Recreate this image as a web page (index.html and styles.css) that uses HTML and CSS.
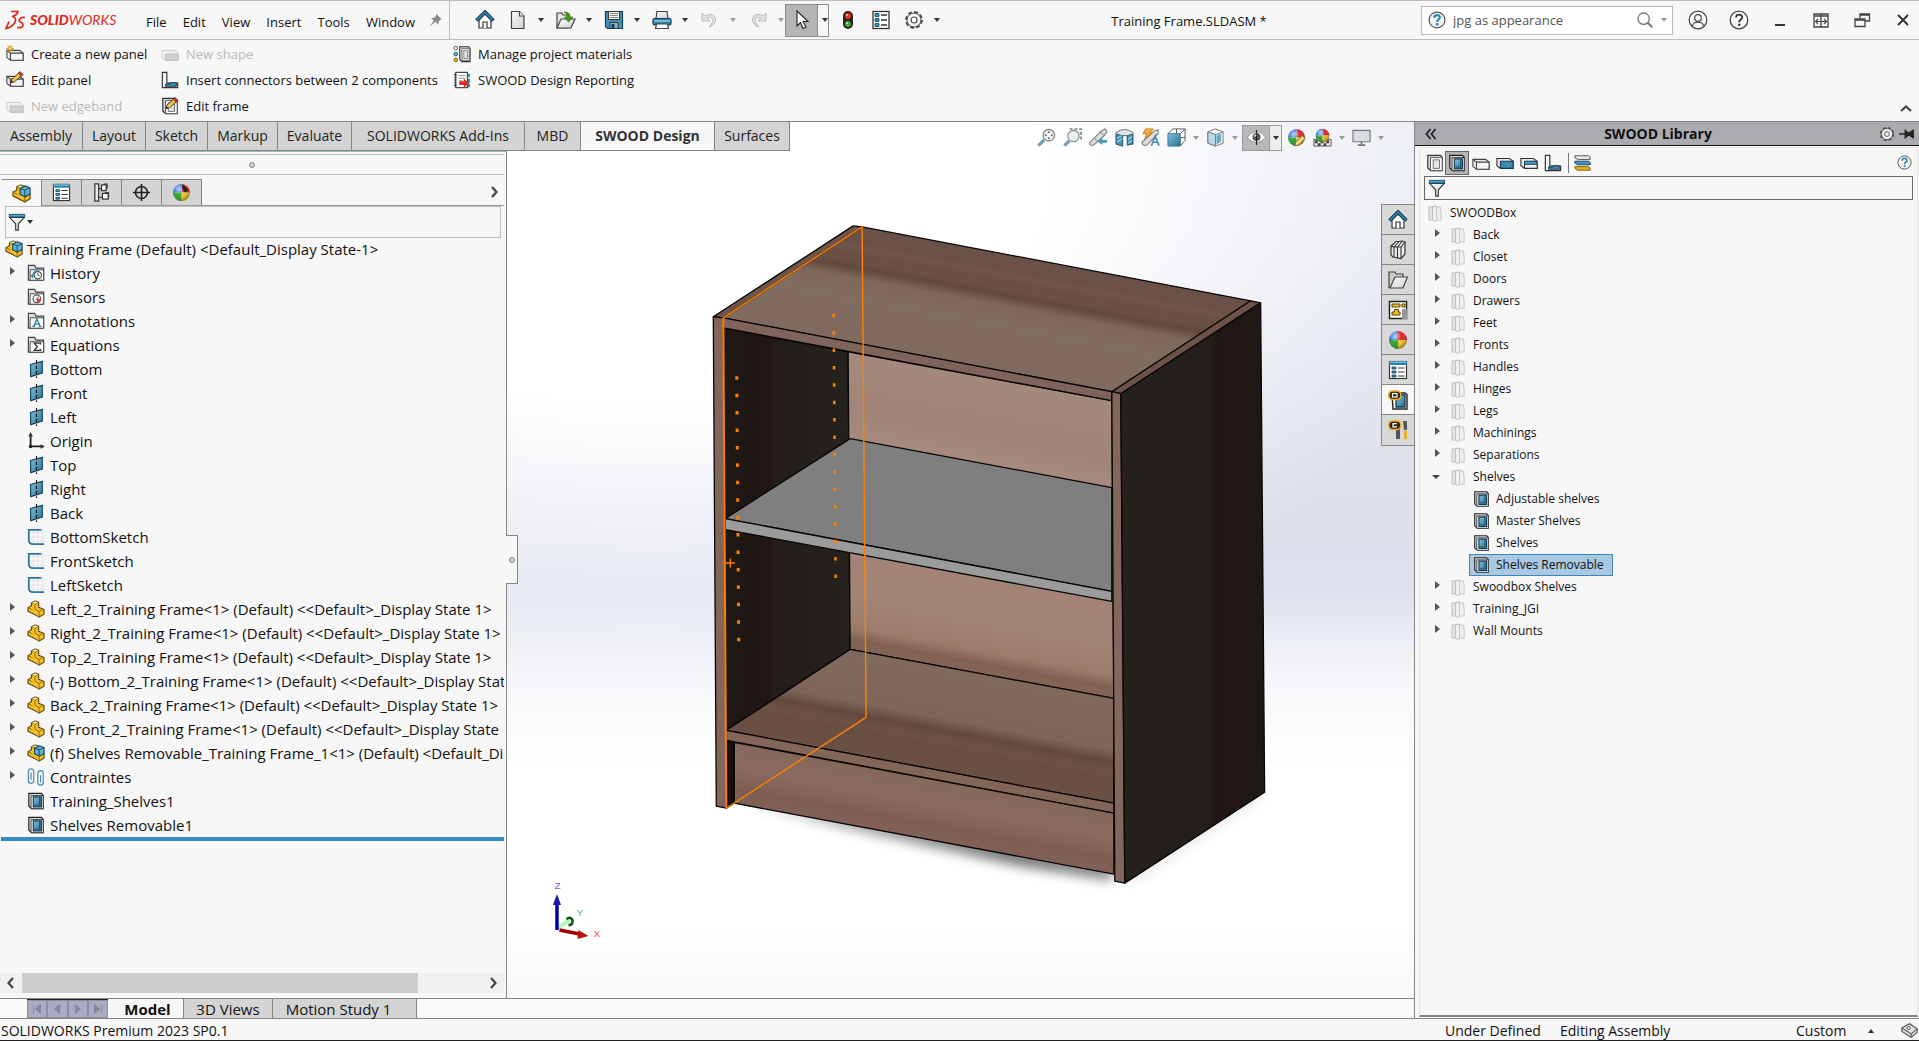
FILE: index.html
```html
<!DOCTYPE html>
<html lang="en">
<head>
<meta charset="UTF-8">
<meta name="viewport" content="width=device-width, initial-scale=1.0">
<title>Training Frame.SLDASM</title>
<link rel="stylesheet" href="styles.css">
</head>
<body>
<!-- icon sprite -->
<svg class="sprite" aria-hidden="true">
  <defs>
    <linearGradient id="gBlue" x1="0" y1="0" x2="1" y2="1"><stop offset="0" stop-color="#7fc0da"/><stop offset="1" stop-color="#2d6f92"/></linearGradient>
    <linearGradient id="gGrey" x1="0" y1="0" x2="1" y2="1"><stop offset="0" stop-color="#ffffff"/><stop offset="1" stop-color="#cfcfcf"/></linearGradient>
    <radialGradient id="gShine" cx="35%" cy="30%" r="70%"><stop offset="0" stop-color="#fff" stop-opacity=".7"/><stop offset=".5" stop-color="#fff" stop-opacity="0"/><stop offset="1" stop-color="#000" stop-opacity=".35"/></radialGradient>
  </defs>
  <symbol id="home" viewBox="0 0 20 20"><path d="M4 10v8h12v-8l-6-6z" fill="#fff" stroke="#333" stroke-width="1.2"/><path d="M8 18v-6h4v6" fill="#fff" stroke="#333" stroke-width="1.2"/><path d="M1.5 10.5 10 2l8.500 8.500" fill="none" stroke="#123f58" stroke-width="3.600"/><path d="M2 10 10 2.200 18 10" fill="none" stroke="#2f82a8" stroke-width="1.800"/></symbol>
  <symbol id="new" viewBox="0 0 20 20"><path d="M3.500 1.500h8l4.500 4.500v12.500h-12.500z" fill="url(#gGrey)" stroke="#444" stroke-width="1.200"/><path d="M11.500 1.500v4.500H16" fill="#eee" stroke="#444" stroke-width="1.200"/></symbol>
  <symbol id="open" viewBox="0 0 20 20"><path d="M1 3h5l1 2h5v13H1z" fill="#e6e6e6" stroke="#444" stroke-width="1.200"/><path d="M1 18 5 9h14l-4 9z" fill="url(#gGrey)" stroke="#444" stroke-width="1.200"/><path d="M8 2c4 0 6 1 6 5h3l-4.500 5L8.500 7h2.500c0-3-1-4-3-5z" fill="#3f9a12" stroke="#2b6d0b" stroke-width=".6"/></symbol>
  <symbol id="save" viewBox="0 0 20 20"><path d="M1.500 1.500h17v17h-15l-2-2z" fill="#4690b5" stroke="#173f55" stroke-width="1.200"/><path d="M4.500 1.500h11v8h-11z" fill="#f4f4f4" stroke="#333"/><path d="M6 3.500h8M6 5.500h8M6 7.500h8" stroke="#888"/><path d="M6 12.500h8v6H6z" fill="#9fb4bf" stroke="#173f55"/><path d="M7.500 14h3v4.500h-3z" fill="#173f55"/></symbol>
  <symbol id="print" viewBox="0 0 20 20"><path d="M5 1.500h10l1 7H4z" fill="url(#gGrey)" stroke="#444" stroke-width="1.200"/><rect x="1" y="8.500" width="18" height="6.500" rx="1.500" fill="#2f82a8" stroke="#123f58" stroke-width="1.200"/><path d="M2 11h16" stroke="#a6dcf0" stroke-width="1.200"/><path d="M4.500 14h11l1 4.500h-13z" fill="#fff" stroke="#444" stroke-width="1.200"/></symbol>
  <symbol id="undo" viewBox="0 0 20 20"><path d="M2 3v8h8L7 8c4-2 7 1 5 5l-3 4c8-2 9-12 1-12.500-2 0-3 .5-5 1.500z" fill="#e2e2e2" stroke="#bbb"/></symbol>
  <symbol id="cursor" viewBox="0 0 20 20"><path d="M5 1v15l3.500-3.500 2.500 6 3-1.500-3-5.500h5z" fill="#fff" stroke="#222" stroke-width="1.100"/></symbol>
  <symbol id="traffic" viewBox="0 0 20 20"><rect x="5" y="1" width="10" height="18" rx="5" fill="#2c2320"/><circle cx="10" cy="6" r="3" fill="#e8321c"/><circle cx="10" cy="14" r="3" fill="#3fa13a"/><circle cx="9" cy="5" r="1" fill="#ffb4a6"/><circle cx="9" cy="13" r="1" fill="#bff0b8"/></symbol>
  <symbol id="list" viewBox="0 0 20 20"><rect x="2" y="1.500" width="16" height="17" fill="#fff" stroke="#333" stroke-width="1.300"/><path d="M4 3.500h4v3H4zM4 8.500h4v3H4zM4 13.500h4v3H4z" fill="#3b8db4" stroke="#17455e" stroke-width=".8"/><path d="M10 5h6M10 10h6M10 15h6" stroke="#333" stroke-width="1.300"/></symbol>
  <symbol id="props" viewBox="0 0 20 20"><rect x="1.500" y="1.500" width="17" height="17" fill="#fff" stroke="#333" stroke-width="1.200"/><path d="M1 1h18v4H1z" fill="#2f82a8"/><path d="M2 2.200h16" stroke="#8fd0e8"/><path d="M4 7h4v2H4zM4 11h4v2H4zM4 15h4v2H4z" fill="#3b8db4" stroke="#17455e" stroke-width=".8"/><path d="M10 8h6.500M10 12h6.500M10 16h6.500" stroke="#333" stroke-width="1.100"/></symbol>
  <symbol id="gear" viewBox="0 0 20 20"><circle cx="10" cy="10" r="7.600" fill="none" stroke="#4a4a4a" stroke-width="2.600" stroke-dasharray="3.600 2.370"/><circle cx="10" cy="10" r="7" fill="#f4f4f4" stroke="#4a4a4a" stroke-width="1"/><circle cx="10" cy="10" r="3" fill="#fff" stroke="#4a4a4a" stroke-width="1.200"/></symbol>
  <symbol id="help" viewBox="0 0 20 20"><circle cx="10" cy="10" r="8.800" fill="none" stroke="#444" stroke-width="1.300"/><path d="M7 7.500c0-4 6.200-3.800 6.200-.3 0 2.200-3 2.400-3 5" fill="none" stroke="#333" stroke-width="1.800"/><circle cx="10.200" cy="14.800" r="1.200" fill="#333"/></symbol>
  <symbol id="helpblue" viewBox="0 0 20 20"><circle cx="10" cy="10" r="8.800" fill="#f4f4f4" stroke="#555" stroke-width="1.300"/><path d="M7 7.500c0-4 6.200-3.800 6.200-.3 0 2.200-3 2.400-3 5" fill="none" stroke="#2e86b0" stroke-width="2.400"/><circle cx="10.200" cy="14.800" r="1.500" fill="#2e86b0"/></symbol>
  <symbol id="user" viewBox="0 0 20 20"><circle cx="10" cy="10" r="8.800" fill="none" stroke="#444" stroke-width="1.200"/><circle cx="10" cy="8" r="3.300" fill="none" stroke="#444" stroke-width="1.200"/><path d="M4.500 16c.5-5 10.500-5 11 0" fill="none" stroke="#444" stroke-width="1.200"/></symbol>
  <symbol id="search" viewBox="0 0 20 20"><circle cx="8.500" cy="8.500" r="6.300" fill="none" stroke="#777" stroke-width="1.500"/><path d="m13 13 5 5" stroke="#777" stroke-width="2.200"/></symbol>
  <symbol id="minimize" viewBox="0 0 20 20"><path d="M5 15h10" stroke="#333" stroke-width="2"/></symbol>
  <symbol id="span" viewBox="0 0 20 20"><path d="M3 4h14v13H3zM3 6h14M10 4v13" fill="none" stroke="#444" stroke-width="1.300"/><path d="M4.500 11.500h11M7 9l-2.500 2.500L7 14M13 9l2.500 2.500L13 14" fill="none" stroke="#444" stroke-width="1.100"/></symbol>
  <symbol id="restore" viewBox="0 0 20 20"><path d="M8 8V4h9.500v7H13M8 5h9.500" fill="none" stroke="#444" stroke-width="1.300"/><path d="M3 9h10v7.500H3zM3 10h10" fill="none" stroke="#444" stroke-width="1.300"/></symbol>
  <symbol id="close" viewBox="0 0 20 20"><path d="m5 5 10 10M15 5 5 15" stroke="#333" stroke-width="1.800"/></symbol>
  <symbol id="pin" viewBox="0 0 16 16"><path d="M8 1 15 7l-2 .5-2 2.500 0 3.500L7.500 10 1 15l4.500-6.500L2.500 6 6 5.500 8 3z" fill="#8a8a8a"/></symbol>
  <symbol id="panel" viewBox="0 0 20 20"><path d="M1 6h14l4 3v8H5l-4-3z" fill="#e9e9e9" stroke="#444" stroke-width="1.200"/><path d="M5 9h14v8H5zM1 6l4 3" fill="#f6f6f6" stroke="#444" stroke-width="1.200"/></symbol>
  <symbol id="star" viewBox="0 0 20 20"><use href="#panel"/><path d="M4.500 0v8M.5 4h8M1.700 1.200l5.600 5.600M7.300 1.200 1.700 6.800" stroke="#d98a1c" stroke-width="1.200"/><circle cx="4.500" cy="4" r="1.500" fill="#ffe08a"/></symbol>
  <symbol id="pencil" viewBox="0 0 20 20"><path d="m5.500 13 1-4L14.500 2l3 3-8 7z" fill="#f0c64a" stroke="#333"/><path d="m13.500 2.500 2-2 3.500 3.500-2 2z" fill="#d5342b" stroke="#5b1d18" stroke-width=".6"/><path d="m5.500 13 .8-2.500L8 12z" fill="#222"/></symbol>
  <symbol id="editpanel" viewBox="0 0 20 20"><use href="#panel"/><use href="#pencil"/></symbol>
  <symbol id="panelblue" viewBox="0 0 20 20"><path d="M1 5h14l4 3v8H5l-4-3z" fill="#e9e9e9" stroke="#333" stroke-width="1.200"/><path d="M5 8h14v8H5z" fill="#3f8bb0" stroke="#0f3b55" stroke-width="1.200"/></symbol>
  <symbol id="paneledge" viewBox="0 0 20 20"><path d="M1 5h14l4 3v8H5l-4-3z" fill="#e9e9e9" stroke="#333" stroke-width="1.200"/><path d="M5 9h14v7H5z" fill="#f3f3f3" stroke="#333" stroke-width="1.200"/><path d="M5 8h14v3.500H5z" fill="#4c9ac0" stroke="#0f3b55"/></symbol>
  <symbol id="edgeoff" viewBox="0 0 20 20"><path d="M1 6h14l4 3v8H5l-4-3z" fill="#f0f0f0" stroke="#c6c6c6"/><path d="M5 10h14v7H5z" fill="#d0d0d0" stroke="#bdbdbd"/></symbol>
  <symbol id="connector" viewBox="0 0 20 20"><path d="M1.500 1.500h5v12h12v5h-17z" fill="#f4f4f4" stroke="#333" stroke-width="1.300"/><path d="M5 14.500h5v-1.500h7v4H5z" fill="#3f8bb0" stroke="#0f3b55"/></symbol>
  <symbol id="frame" viewBox="0 0 20 20"><path d="M2 1.500h14l2 2v15H5l-3-3z" fill="#d6d6d6" stroke="#333" stroke-width="1.300"/><path d="M5 4h13v14.500H5z" fill="#fbfbfb" stroke="#555"/><path d="M8 6.500h7v9.500H8z" fill="#e6e6e6" stroke="#666"/></symbol>
  <symbol id="frameblue" viewBox="0 0 20 20"><path d="M2 1.500h14l2 2v15H5l-3-3z" fill="#d6d6d6" stroke="#222" stroke-width="1.300"/><path d="M4.500 4H18v14.500H4.500z" fill="#fbfbfb" stroke="#333"/><path d="M7 5.500h9v11H7z" fill="url(#gBlue)" stroke="#0f3b55" stroke-width="1.300"/><path d="M14 6v8.500H8" fill="none" stroke="#164a66"/></symbol>
  <symbol id="editframe" viewBox="0 0 20 20"><use href="#frame"/><use href="#pencil"/></symbol>
  <symbol id="materials" viewBox="0 0 20 20"><circle cx="3" cy="3.500" r="2" fill="#fff" stroke="#444"/><circle cx="3" cy="10" r="2" fill="#4fb0dc" stroke="#1c5573"/><circle cx="3" cy="16.500" r="2" fill="#e8b818" stroke="#7a5e08"/><path d="M7.500 2h10l1.500 2v14.500H9.500L7.500 16z" fill="#d6d6d6" stroke="#333" stroke-width="1.200"/><path d="M10 4h8v13h-8z" fill="#fff" stroke="#666"/><path d="M12 6h4v9h-4z" fill="#e6e6e6" stroke="#777"/></symbol>
  <symbol id="report" viewBox="0 0 20 20"><rect x="3" y="1.500" width="13" height="17" fill="#fff" stroke="#333" stroke-width="1.200"/><path d="M1 4h3M1 7h3M1 10h3M1 13h3M1 16h3" stroke="#333" stroke-width="1.200"/><path d="M6 5h8M6 8h8M6 11h5" stroke="#888"/><path d="M17.500 3v4M17.500 9v4M17.500 14v4" stroke="#2f82a8" stroke-width="2.400"/><path d="M7 11.500h5V8.500l6 5-6 5v-3H7z" fill="#d9302c"/></symbol>
  <symbol id="part" viewBox="0 0 20 20"><path d="m1 8.500 4-2V3l4-2 4 1.500V8l6 2.500v5L13.500 19 9 16.500 1 12.500z" fill="#f3bf24" stroke="#5a430b" stroke-width="1.200" stroke-linejoin="round"/><path d="m5 3 4 1.700 4-2M9 4.700V10l4.500 2.500L19 10.500M13.500 12.500V19M1 8.500l5 2.500" fill="none" stroke="#8a6712"/><path d="m5.800 3 3.200-1.500 3.200 1.200L9 4.200z" fill="#ffe9a0"/></symbol>
  <symbol id="assembly" viewBox="0 0 20 20"><use href="#part"/><path d="m8.500 4.500 5.500-2.500 5 2v6.500l-5 3-5.500-2.500z" fill="#5fb0d4" stroke="#17455e" stroke-width="1.200"/><path d="m8.500 4.500 5 2 5.500-2.500M13.500 6.500v6.500" fill="none" stroke="#17455e"/></symbol>
  <symbol id="config" viewBox="0 0 20 20"><path d="M3 1v18h4V1zM7 6h4M7 15h4" fill="#eee" stroke="#333" stroke-width="1.300"/><path d="M10 2h5v6h-5zM11 11h6v6h-6z" fill="#fff" stroke="#333" stroke-width="1.300"/><path d="M13 2V1h3v5M14 11v-1h3.500v6" fill="none" stroke="#333"/></symbol>
  <symbol id="target" viewBox="0 0 20 20"><circle cx="10" cy="10" r="6.300" fill="none" stroke="#222" stroke-width="1.700"/><path d="M10 1v18M1 10h18" stroke="#222" stroke-width="1.700"/></symbol>
  <symbol id="ball" viewBox="0 0 20 20"><path d="M10 10V1A9 9 0 0 1 19 10z" fill="#df2626"/><path d="M10 10H1A9 9 0 0 1 10 1z" fill="#2b6fe0"/><path d="M10 10v9A9 9 0 0 1 1 10z" fill="#2ea02b"/><path d="M10 10h9a9 9 0 0 1-9 9z" fill="#efc52c"/><circle cx="10" cy="10" r="9" fill="url(#gShine)"/></symbol>
  <symbol id="display" viewBox="0 0 20 20"><use href="#ball"/><path d="m11 1 6 6-2 3c-3-1-5-4-4-9z" fill="#222"/></symbol>
  <symbol id="funnel" viewBox="0 0 20 20"><path d="M2 5h16l-6.500 7v7h-3v-7z" fill="url(#gGrey)" stroke="#333" stroke-width="1.200"/><path d="M1.500 1.500h17v3h-17z" fill="#4ba3cc" stroke="#164a66"/></symbol>
  <symbol id="folder" viewBox="0 0 20 20"><path d="M1.500 18V1.500h7l1.500 3h8.500V18z" fill="#ddd" stroke="#444" stroke-width="1.300"/><path d="M3.500 6.500h15V18h-15z" fill="#fafafa" stroke="#444"/></symbol>
  <symbol id="f-history" viewBox="0 0 20 20"><use href="#folder"/><circle cx="12" cy="12.500" r="4" fill="#fff" stroke="#444" stroke-width="1.200"/><path d="M12 10v2.500l2 1" fill="none" stroke="#444"/><path d="M3.500 12h5l-2.500 4z" fill="#2e86b0"/><path d="M6.500 12c.5-4 4-5 6-4" fill="none" stroke="#2e86b0" stroke-width="1.400"/></symbol>
  <symbol id="f-sensor" viewBox="0 0 20 20"><use href="#folder"/><circle cx="11" cy="12" r="4.300" fill="#fff" stroke="#444" stroke-width="1.200"/><path d="M11 12h4.300a4.300 4.300 0 0 1-4.300 4.300z" fill="#e03a1c"/><path d="m10 13 3-3.500" stroke="#333"/></symbol>
  <symbol id="f-note" viewBox="0 0 20 20"><use href="#folder"/><path d="m7.500 16 3.500-8.500 3.500 8.500M8.500 13.500h5M6 16h3M13 16h3" fill="none" stroke="#2e7da6" stroke-width="1.500"/></symbol>
  <symbol id="f-sum" viewBox="0 0 20 20"><use href="#folder"/><path d="M15 9.500v-1.500H8l3.500 4L8 16h7v-1.500" fill="none" stroke="#333" stroke-width="1.400"/></symbol>
  <symbol id="plane" viewBox="0 0 20 20"><path d="m4 5 13-3.500v13L4 18.500z" fill="url(#gBlue)" stroke="#164a66" stroke-width="1.300"/><path d="M10.500 0v20" stroke="#111" stroke-width="1.200" stroke-dasharray="4 2"/></symbol>
  <symbol id="origin" viewBox="0 0 20 20"><path d="M4 3v13h13" fill="none" stroke="#222" stroke-width="2"/><path d="M4 0 1.500 5h5zM20 16l-5-2.500v5z" fill="#333"/><circle cx="4" cy="16" r="2" fill="#222"/></symbol>
  <symbol id="sketch" viewBox="0 0 20 20"><path d="M7 0v18M12 0v18M17 0v18M2 5h18M2 10h18M2 15h18" stroke="#e2e2e2"/><path d="M16 2H2v11q0 5 5 5h12" fill="none" stroke="#2d769e" stroke-width="2"/></symbol>
  <symbol id="clips" viewBox="0 0 20 20"><path d="M1.500 4v10q0 3 3 3t3-3V4q0-3-3-3t-3 3M4.500 5v8M12 6v10q0 3 3 3t3-3V6q0-3-3-3t-3 3M15 8v8" fill="none" stroke="#4587a8" stroke-width="1.300"/></symbol>
  <symbol id="book" viewBox="0 0 16 18"><path d="M1 2h8v14H1z" fill="#e4e4e4" stroke="#bdbdbd"/><path d="M5 1.500 9 1v15.500l-2 1-2-1.500z" fill="#f6f6f6" stroke="#b5b5b5"/><path d="M9 2h4l1 5v9H9z" fill="#efefef" stroke="#c3c3c3"/></symbol>
  <symbol id="stack" viewBox="0 0 20 20"><path d="M1 2h15l2 1.500V6H4L1 4z" fill="#eee" stroke="#444"/><path d="M1 8h15l2 1.500V12H4l-3-2z" fill="#4596bd" stroke="#123f58"/><path d="M1 14h15l2 1.500V18H4l-3-2z" fill="#e2b022" stroke="#7a5e08"/></symbol>
  <symbol id="zoomfit" viewBox="0 0 20 20"><path d="m1.500 18.500 6-6" stroke="#6b9fba" stroke-width="3.400"/><circle cx="12.500" cy="7.500" r="6" fill="#f6fafc" stroke="#777" stroke-width="1.200"/><path d="m12.500 3 1.500 2h-3zM12.500 12l1.500-2h-3zM8 7.500 10 6v3zM17 7.500 15 6v3z" fill="#444"/></symbol>
  <symbol id="zoomarea" viewBox="0 0 20 20"><path d="M7 1h12v13" fill="none" stroke="#444" stroke-width="1.200" stroke-dasharray="3 2"/><path d="m1.500 18.500 5-5" stroke="#6b9fba" stroke-width="3.400"/><circle cx="11" cy="8.500" r="6" fill="#e6f1f6" stroke="#888" stroke-width="1.200"/></symbol>
  <symbol id="prev" viewBox="0 0 20 20"><path d="m1 15 12-12 4-2 2 3-3 4-11 10q-5 1-4-3z" fill="#ddd" stroke="#777" stroke-width="1.100"/><path d="m6 11 4 4M12 4l4 4" stroke="#777"/><path d="m9 14 5-4v2.500h5v3h-5V18z" fill="#4a96bd"/></symbol>
  <symbol id="section" viewBox="0 0 20 20"><path d="M1 5q9-7 18 0v12l-6 1V8H8v11l-7-2z" fill="#e4e4e4" stroke="#666"/><path d="M1.500 6.500 8 8v11l-6.500-2zM13 8l5.500-1.500v10L13 18z" fill="#4b96bb" stroke="#27607d"/><path d="m2 11 5-3M2 15l6-4M14 12l4-3M14 16l4-3" stroke="#cfe8f3"/></symbol>
  <symbol id="annview" viewBox="0 0 20 20"><path d="m1 15 13-12 4-1v4L6 18q-5 1-5-3z" fill="#ddd" stroke="#777" stroke-width="1.100"/><path d="M5 1h8l-4 4h3L4 11l2-5H2z" fill="#f3b23a" stroke="#c07b18"/><path d="m11 18.500 4-10 4 10M12.500 15h5" fill="none" stroke="#4b8fb5" stroke-width="1.800"/></symbol>
  <symbol id="cube" viewBox="0 0 20 20"><path d="m1 6 5-5h13v12l-5 6M14 6l5-5M10 1v5M14 10h5" fill="#fff" stroke="#555"/><path d="M1 6h13v13H1z" fill="url(#gBlue)" stroke="#3d7695"/></symbol>
  <symbol id="style" viewBox="0 0 20 20"><path d="m2 4 8-3 8 3v12l-8 3-8-3z" fill="#f2f6f8" stroke="#777"/><path d="m2 4 8 3v12l-8-3z" fill="#b7d9e8" stroke="#777"/><path d="m11 8 5-2v8l-5 3z" fill="#67a9c9"/><path d="m10 7 8-3" stroke="#777"/></symbol>
  <symbol id="eye" viewBox="0 0 20 20"><path d="M0 10q10-13 20 0-10 11-20 0z" fill="#fff" stroke="#888"/><circle cx="10" cy="9.500" r="4.200" fill="#555"/><path d="M10 2v16" stroke="#222" stroke-width="1.200"/><circle cx="8.500" cy="8" r="1.300" fill="#ccc"/></symbol>
  <symbol id="appearance" viewBox="0 0 20 20"><use href="#ball"/><path d="m8 19 1-4 7-7 3 3-7 7z" fill="#f0d878" stroke="#665"/></symbol>
  <symbol id="scene" viewBox="0 0 20 20"><path d="M1 12h18v7H1z" fill="#eee" stroke="#555"/><path d="M2 13h3v3H2zM8 13h3v3H8zM14 13h3v3h-3zM5 16h3v3H5zM11 16h3v3h-3z" fill="#444"/><svg x="2" y="0" width="16" height="16"><use href="#ball"/></svg></symbol>
  <symbol id="monitor" viewBox="0 0 20 20"><path d="M1 2.500h18v12H1z" fill="#d9dde2" stroke="#777" stroke-width="1.200"/><path d="M10 14.500v3M6 18h8" stroke="#777" stroke-width="1.800"/></symbol>
  <symbol id="books" viewBox="0 0 20 20"><path d="m3 6 5-4.500 3 0 3-.5 3 1v12l-4 4.500-8-1.500-2-2z" fill="#eee" stroke="#333" stroke-width="1.200"/><path d="M6 7v10M9.500 7v11M13 7v11M3 6l3 1 5-5.500M6 7h3.500L14 1.500M9.500 7H13l4-5" fill="none" stroke="#333" stroke-width="1.100"/></symbol>
  <symbol id="explorer" viewBox="0 0 20 20"><path d="M1 18V2h6l1 2h7v3" fill="#ccc" stroke="#444" stroke-width="1.200"/><path d="M2 18 7 7h12.500L15 18z" fill="url(#gGrey)" stroke="#444" stroke-width="1.200"/></symbol>
  <symbol id="palette" viewBox="0 0 20 20"><rect x="1.500" y="1.500" width="17" height="17" fill="#fff" stroke="#222" stroke-width="1.500"/><path d="M4 4h8v3H4zM14 4h3v3h-3zM4 15v-3h2.500V9.500h4V12H12v3z" fill="#f0bd1c" stroke="#5a430b"/><path d="M14 9h5v10h-5z" fill="#999"/></symbol>
  <symbol id="swoodlib" viewBox="0 0 20 20"><path d="M4 3h13l2 1.500V19H5z" fill="#fff" stroke="#222" stroke-width="1.400"/><path d="M8 5h9v12H8z" fill="url(#gBlue)" stroke="#0f3b55" stroke-width="1.300"/><rect x=".8" y="1" width="12" height="8.500" rx="4" fill="#2a2418" stroke="#f0ab1c" stroke-width="1.600"/><rect x="4.500" y="3.500" width="4.500" height="3.500" fill="none" stroke="#fff" stroke-width="1.200"/></symbol>
  <symbol id="swoodtool" viewBox="0 0 20 20"><path d="M8 9h4v10H8z" fill="#555"/><path d="M15 1h4v9h-3z" fill="#555"/><path d="M16 11h3v8h-3z" fill="#e0b51c"/><rect x=".8" y="1" width="12" height="8.500" rx="4" fill="#2a2418" stroke="#f0ab1c" stroke-width="1.600"/><path d="M9 3.700H5v3.200h4" fill="none" stroke="#fff" stroke-width="1.300"/></symbol>
  <symbol id="tag" viewBox="0 0 20 20"><path d="m1 7 9-5 9 6v4l-7 6-11-7z" fill="#e2e2e2" stroke="#555" stroke-width="1.300"/><path d="m1 7 11 7 7-6M12 14v4" fill="none" stroke="#555" stroke-width="1.200"/><circle cx="9" cy="7" r="2" fill="none" stroke="#555"/></symbol>
  <symbol id="pushpin" viewBox="0 0 18 14"><path d="M0 7h7M7 2v10M7 3l5 4-5 4zM16 2v10M16 3l-5 3v2l5 3z" fill="#222" stroke="#222" stroke-width="1.500"/></symbol>
  <symbol id="chev" viewBox="0 0 12 12"><path d="m4 1 4.500 5L4 11" fill="none" stroke="#444" stroke-width="2.200"/></symbol>
</svg>

<header class="titlebar">
  <div class="brand">
    <svg class="ds" viewBox="0 0 22 22"><path d="M7 2.500h7q-1 4-6 5 5 1 3 6-3 5-9 6l3-7M13 18.500q6 1 6-2.500 0-2-2.500-3T16 10q1-2 5-1.500" fill="none" stroke="#d9291c" stroke-width="1.700"/></svg>
    <span class="brand-name"><b>SOLID</b>WORKS</span>
  </div>
  <nav class="menu">
    <a href="#">File</a><a href="#">Edit</a><a href="#">View</a><a href="#">Insert</a><a href="#">Tools</a><a href="#">Window</a>
  </nav>
  <svg class="pin"><use href="#pin"/></svg>
  <div class="quick">
    <button aria-label="Home"><svg><use href="#home"/></svg></button>
    <button aria-label="New"><svg><use href="#new"/></svg></button><i class="caret"></i>
    <button aria-label="Open"><svg><use href="#open"/></svg></button><i class="caret"></i>
    <button aria-label="Save"><svg><use href="#save"/></svg></button><i class="caret"></i>
    <button aria-label="Print"><svg><use href="#print"/></svg></button><i class="caret"></i>
    <button aria-label="Undo"><svg><use href="#undo"/></svg></button><i class="caret off"></i>
    <button aria-label="Redo"><svg class="flip"><use href="#undo"/></svg></button><i class="caret off"></i>
    <div class="select-tool"><button aria-label="Select"><svg><use href="#cursor"/></svg></button><i class="caret"></i></div>
    <button aria-label="Rebuild"><svg><use href="#traffic"/></svg></button>
    <button aria-label="File properties"><svg><use href="#list"/></svg></button>
    <button aria-label="Options"><svg><use href="#gear"/></svg></button><i class="caret"></i>
  </div>
  <div class="doc-name">Training Frame.SLDASM *</div>
  <div class="search">
    <svg><use href="#helpblue"/></svg>
    <input type="text" value="jpg as appearance" aria-label="Search help">
    <svg><use href="#search"/></svg><i class="caret soft"></i>
  </div>
  <div class="window-buttons">
    <button aria-label="Login"><svg><use href="#user"/></svg></button>
    <button aria-label="Help"><svg><use href="#help"/></svg></button>
    <button aria-label="Minimize"><svg><use href="#minimize"/></svg></button>
    <button aria-label="Span displays"><svg><use href="#span"/></svg></button>
    <button aria-label="Restore"><svg><use href="#restore"/></svg></button>
    <button aria-label="Close"><svg><use href="#close"/></svg></button>
  </div>
</header>

<section class="ribbon">
  <div class="ribbon-col col-a">
    <button><svg><use href="#star"/></svg>Create a new panel</button>
    <button><svg><use href="#editpanel"/></svg>Edit panel</button>
    <button disabled><svg><use href="#edgeoff"/></svg>New edgeband</button>
  </div>
  <div class="ribbon-col col-b">
    <button disabled><svg><use href="#edgeoff"/></svg>New shape</button>
    <button><svg><use href="#connector"/></svg>Insert connectors between 2 components</button>
    <button><svg><use href="#editframe"/></svg>Edit frame</button>
  </div>
  <div class="ribbon-col">
    <button><svg><use href="#materials"/></svg>Manage project materials</button>
    <button><svg><use href="#report"/></svg>SWOOD Design Reporting</button>
  </div>
  <button class="collapse" aria-label="Collapse ribbon"><svg><use href="#chev"/></svg></button>
</section>

<main class="workspace">
  <div class="document">
    <div class="tab-row">
      <nav class="cm-tabs">
        <button class="w-assembly">Assembly</button>
        <button class="w-layout">Layout</button>
        <button class="w-sketch">Sketch</button>
        <button class="w-markup">Markup</button>
        <button class="w-evaluate">Evaluate</button>
        <button class="w-addins">SOLIDWORKS Add-Ins</button>
        <button class="w-mbd">MBD</button>
        <button class="w-swood current">SWOOD Design</button>
        <button class="w-surfaces">Surfaces</button>
      </nav>
      <div class="hud">
        <button aria-label="Zoom to fit"><svg><use href="#zoomfit"/></svg></button>
        <button aria-label="Zoom to area"><svg><use href="#zoomarea"/></svg></button>
        <button aria-label="Previous view"><svg><use href="#prev"/></svg></button>
        <button aria-label="Section view"><svg><use href="#section"/></svg></button>
        <button aria-label="Annotation views"><svg><use href="#annview"/></svg></button>
        <button aria-label="View orientation"><svg><use href="#cube"/></svg></button><i class="caret soft"></i>
        <button aria-label="Display style"><svg><use href="#style"/></svg></button><i class="caret soft"></i>
        <div class="eye-tool"><button aria-label="Hide or show"><svg><use href="#eye"/></svg></button><i class="caret"></i></div>
        <button aria-label="Edit appearance"><svg><use href="#appearance"/></svg></button>
        <button aria-label="Apply scene"><svg><use href="#scene"/></svg></button><i class="caret soft"></i>
        <button aria-label="View settings"><svg><use href="#monitor"/></svg></button><i class="caret soft"></i>
      </div>
    </div>

    <div class="doc-body">
      <aside class="feature-manager">
        <div class="grip"><i class="dot"></i></div>
        <div class="fm-tabs">
          <button class="current" aria-label="FeatureManager"><svg><use href="#assembly"/></svg></button>
          <button aria-label="PropertyManager"><svg><use href="#props"/></svg></button>
          <button aria-label="ConfigurationManager"><svg><use href="#config"/></svg></button>
          <button aria-label="DimXpertManager"><svg><use href="#target"/></svg></button>
          <button aria-label="DisplayManager"><svg><use href="#display"/></svg></button>
          <button class="more" aria-label="More"><svg><use href="#chev"/></svg></button>
        </div>
        <label class="fm-filter"><svg><use href="#funnel"/></svg><i class="caret"></i><input type="text" aria-label="Filter tree"></label>
        <ul class="tree">
          <li class="root"><svg><use href="#assembly"/></svg>Training Frame (Default) &lt;Default_Display State-1&gt;</li>
          <li><button class="twist" aria-label="Expand"></button><svg><use href="#f-history"/></svg>History</li>
          <li><svg><use href="#f-sensor"/></svg>Sensors</li>
          <li><button class="twist" aria-label="Expand"></button><svg><use href="#f-note"/></svg>Annotations</li>
          <li><button class="twist" aria-label="Expand"></button><svg><use href="#f-sum"/></svg>Equations</li>
          <li><svg><use href="#plane"/></svg>Bottom</li>
          <li><svg><use href="#plane"/></svg>Front</li>
          <li><svg><use href="#plane"/></svg>Left</li>
          <li><svg><use href="#origin"/></svg>Origin</li>
          <li><svg><use href="#plane"/></svg>Top</li>
          <li><svg><use href="#plane"/></svg>Right</li>
          <li><svg><use href="#plane"/></svg>Back</li>
          <li><svg><use href="#sketch"/></svg>BottomSketch</li>
          <li><svg><use href="#sketch"/></svg>FrontSketch</li>
          <li><svg><use href="#sketch"/></svg>LeftSketch</li>
          <li><button class="twist" aria-label="Expand"></button><svg><use href="#part"/></svg>Left_2_Training Frame&lt;1&gt; (Default) &lt;&lt;Default&gt;_Display State 1&gt;</li>
          <li><button class="twist" aria-label="Expand"></button><svg><use href="#part"/></svg>Right_2_Training Frame&lt;1&gt; (Default) &lt;&lt;Default&gt;_Display State 1&gt;</li>
          <li><button class="twist" aria-label="Expand"></button><svg><use href="#part"/></svg>Top_2_Training Frame&lt;1&gt; (Default) &lt;&lt;Default&gt;_Display State 1&gt;</li>
          <li><button class="twist" aria-label="Expand"></button><svg><use href="#part"/></svg>(-) Bottom_2_Training Frame&lt;1&gt; (Default) &lt;&lt;Default&gt;_Display State</li>
          <li><button class="twist" aria-label="Expand"></button><svg><use href="#part"/></svg>Back_2_Training Frame&lt;1&gt; (Default) &lt;&lt;Default&gt;_Display State 1&gt;</li>
          <li><button class="twist" aria-label="Expand"></button><svg><use href="#part"/></svg>(-) Front_2_Training Frame&lt;1&gt; (Default) &lt;&lt;Default&gt;_Display State 1</li>
          <li><button class="twist" aria-label="Expand"></button><svg><use href="#assembly"/></svg>(f) Shelves Removable_Training Frame_1&lt;1&gt; (Default) &lt;Default_Disp</li>
          <li><button class="twist" aria-label="Expand"></button><svg><use href="#clips"/></svg>Contraintes</li>
          <li><svg><use href="#frameblue"/></svg>Training_Shelves1</li>
          <li><svg><use href="#frameblue"/></svg>Shelves Removable1</li>
        </ul>
        <div class="rollback"></div>
        <div class="hscroll">
          <button aria-label="Scroll left"><svg class="flip"><use href="#chev"/></svg></button>
          <div class="track"><div class="thumb"></div></div>
          <button aria-label="Scroll right"><svg><use href="#chev"/></svg></button>
        </div>
        <button class="splitter" aria-label="Collapse panel"><i class="dot"></i></button>
      </aside>

      <div class="canvas">
        <svg class="model" viewBox="507 150 907 848">
          <defs>
            <linearGradient id="wTop" gradientUnits="userSpaceOnUse" x1="1050" y1="262" x2="1029" y2="375">
              <stop offset="0" stop-color="#6a5148"/><stop offset=".12" stop-color="#6b5047"/><stop offset=".18" stop-color="#71554a"/><stop offset=".24" stop-color="#6a4d43"/><stop offset=".29" stop-color="#6d5147"/><stop offset=".35" stop-color="#62483e"/><stop offset=".44" stop-color="#7e675a"/><stop offset=".6" stop-color="#816c60"/><stop offset="1" stop-color="#80695f"/>
            </linearGradient>
            <linearGradient id="wBottom" gradientUnits="userSpaceOnUse" x1="982" y1="673" x2="963" y2="774">
              <stop offset="0" stop-color="#816a5d"/><stop offset=".5" stop-color="#7d6659"/><stop offset=".62" stop-color="#62483e"/><stop offset=".7" stop-color="#6d5147"/><stop offset=".8" stop-color="#684d43"/><stop offset="1" stop-color="#6b5046"/>
            </linearGradient>
            <linearGradient id="wBack" gradientUnits="userSpaceOnUse" x1="1000" y1="375" x2="944" y2="675">
              <stop offset="0" stop-color="#a38a7c"/><stop offset=".2" stop-color="#a28478"/><stop offset=".28" stop-color="#a68a7e"/><stop offset=".36" stop-color="#a18276"/><stop offset=".8" stop-color="#a38576"/><stop offset=".9" stop-color="#9b7c6b"/><stop offset=".94" stop-color="#806152"/><stop offset="1" stop-color="#86675c"/>
            </linearGradient>
            <linearGradient id="wKick" gradientUnits="userSpaceOnUse" x1="930" y1="775" x2="917" y2="845">
              <stop offset="0" stop-color="#85675b"/><stop offset=".4" stop-color="#8a6a5e"/><stop offset=".7" stop-color="#7e5e52"/><stop offset="1" stop-color="#83645a"/>
            </linearGradient>
            <linearGradient id="wSide" gradientUnits="userSpaceOnUse" x1="1122" y1="0" x2="1264" y2="0">
              <stop offset="0" stop-color="#26211d"/><stop offset=".6" stop-color="#241f1a"/><stop offset=".68" stop-color="#1f1613"/><stop offset=".78" stop-color="#221613"/><stop offset=".86" stop-color="#1e1714"/><stop offset="1" stop-color="#1f1915"/>
            </linearGradient>
            <linearGradient id="wInner" gradientUnits="userSpaceOnUse" x1="723" y1="0" x2="850" y2="0">
              <stop offset="0" stop-color="#1f1a17"/><stop offset=".25" stop-color="#1e1613"/><stop offset=".36" stop-color="#221613"/><stop offset=".42" stop-color="#231d19"/><stop offset="1" stop-color="#26221d"/>
            </linearGradient>
            <filter id="soft" x="-20%" y="-50%" width="140%" height="200%"><feGaussianBlur stdDeviation="7"/></filter>
          </defs>
          <polygon points="745,800 1114,868 1112,878 1020,864 850,826" fill="#000" opacity=".7" filter="url(#soft)"/>
          <polygon points="1128,876 1262,788 1262,794 1132,880" fill="#000" opacity=".2" filter="url(#soft)"/>
          <g stroke="#080605" stroke-width="1.300" stroke-linejoin="round">
            <polygon points="723,327 848,351 850,649 726,730" fill="url(#wInner)"/>
            <polygon points="848,351 1112,400 1114,698 850,649" fill="url(#wBack)"/>
            <polygon points="850,649 1114,698 1114,803 726,730" fill="url(#wBottom)"/>
            <polygon points="726,730 1114,803 1114,813 726,740" fill="#83655a"/>
            <polygon points="726,740 734,742 734,803 726,808" fill="#14100e"/>
            <polygon points="734,742 1114,813 1114,874 734,803" fill="url(#wKick)"/>
            <polygon points="850,438 1112,487 1112,591 725,518" fill="#7f7f7f"/>
            <polygon points="725,518 1112,591 1112,601 725,529" fill="#9b9b9b"/>
            <polygon points="723,317 862,226 1251,300 1112,391" fill="url(#wTop)"/>
            <polygon points="723,317 1112,391 1112,400 723,327" fill="#80635a"/>
            <polygon points="713,316 853,225 862,226 723,317" fill="#6f544a"/>
            <polygon points="713,316 723,317 726,808 716,806" fill="#84655b"/>
            <polygon points="1112,391 1251,300 1261,302 1121,393" fill="#6d5248"/>
            <polygon points="1112,391 1121,393 1125,883 1115,881" fill="#84675c"/>
            <polygon points="1121,393 1261,302 1265,792 1125,883" fill="url(#wSide)"/>
          </g>
          <g fill="none" stroke="#ff8000" stroke-width="1.400">
            <path d="M723 317 862 226 866 717 726 808"/>
            <path d="M723 317 726 808" stroke-width="2"/>
            <path d="M730 558v9M725.500 562.500h9"/>
            <path d="M736.500 375.500 738.500 642" stroke-width="3" stroke-dasharray="3.500 13.950"/>
            <path d="M833.500 313 835.500 580" stroke-width="2.600" stroke-dasharray="3.500 13.900"/>
          </g>
          <!-- orientation triad -->
          <path d="M557 928 569 920" stroke="#b4f5b4" stroke-width="4"/>
          <path d="M566 919q4-3 6 1 1 5-4 5" fill="none" stroke="#0a5a12" stroke-width="2.600"/>
          <path d="M556.500 930v-28" stroke="#0000a0" stroke-width="3.500"/>
          <path d="m556.500 894-4 11h8z" fill="#1a1ab0"/>
          <path d="m559 930 20 4" stroke="#a00000" stroke-width="3.500"/>
          <path d="m588 936-10-6-1 9z" fill="#c01010"/>
          <g class="axis"><text x="554" y="889" fill="#6464f0">Z</text><text x="576" y="916" fill="#6ab46a">Y</text><text x="593" y="937" fill="#f05a5a">X</text></g>
        </svg>
        <div class="task-tabs">
          <button aria-label="Resources"><svg><use href="#home"/></svg></button>
          <button aria-label="Design Library"><svg><use href="#books"/></svg></button>
          <button aria-label="File Explorer"><svg><use href="#explorer"/></svg></button>
          <button aria-label="View Palette"><svg><use href="#palette"/></svg></button>
          <button aria-label="Appearances"><svg><use href="#ball"/></svg></button>
          <button aria-label="Custom Properties"><svg><use href="#props"/></svg></button>
          <button class="current" aria-label="SWOOD Library"><svg><use href="#swoodlib"/></svg></button>
          <button aria-label="SWOOD Tools"><svg><use href="#swoodtool"/></svg></button>
        </div>
      </div>
    </div>

    <div class="sheet-row">
      <div class="sheet-nav">
        <button aria-label="First"><svg viewBox="0 0 16 16"><path d="M4 3v10M12 3 6 8l6 5z"/></svg></button>
        <button aria-label="Previous"><svg viewBox="0 0 16 16"><path d="M11 3 5 8l6 5z"/></svg></button>
        <button aria-label="Next"><svg viewBox="0 0 16 16"><path d="m5 3 6 5-6 5z"/></svg></button>
        <button aria-label="Last"><svg viewBox="0 0 16 16"><path d="M12 3v10M4 3l6 5-6 5z"/></svg></button>
      </div>
      <button class="sheet w-model current">Model</button>
      <button class="sheet w-views">3D Views</button>
      <button class="sheet w-motion">Motion Study 1</button>
    </div>
  </div>

  <aside class="taskpane">
    <div class="tp-head">
      <button aria-label="Collapse"><svg viewBox="0 0 12 12"><path d="M5.500 1 1.500 6l4 5M10.500 1l-4 5 4 5" fill="none" stroke="#222" stroke-width="1.800"/></svg></button>
      <h2>SWOOD Library</h2>
      <button aria-label="Settings"><svg class="g"><use href="#gear"/></svg></button>
      <button aria-label="Pin"><svg class="g"><use href="#pushpin"/></svg></button>
    </div>
    <div class="tp-body">
      <div class="tp-tools">
        <button aria-label="Frames"><svg><use href="#frame"/></svg></button>
        <button class="on" aria-label="SWOODBox"><svg><use href="#frameblue"/></svg></button>
        <button aria-label="Panels"><svg><use href="#panel"/></svg></button>
        <button aria-label="Materials"><svg><use href="#panelblue"/></svg></button>
        <button aria-label="Edgebands"><svg><use href="#paneledge"/></svg></button>
        <button aria-label="Connectors"><svg><use href="#connector"/></svg></button>
        <i class="sep"></i>
        <button aria-label="Stacks"><svg><use href="#stack"/></svg></button>
        <button class="tp-help" aria-label="Help"><svg><use href="#helpblue"/></svg></button>
      </div>
      <label class="tp-filter"><svg><use href="#funnel"/></svg><input type="text" aria-label="Filter library"></label>
      <ul class="lib">
        <li class="root"><svg><use href="#book"/></svg>SWOODBox</li>
        <li><button class="twist" aria-label="Expand"></button><svg><use href="#book"/></svg>Back</li>
        <li><button class="twist" aria-label="Expand"></button><svg><use href="#book"/></svg>Closet</li>
        <li><button class="twist" aria-label="Expand"></button><svg><use href="#book"/></svg>Doors</li>
        <li><button class="twist" aria-label="Expand"></button><svg><use href="#book"/></svg>Drawers</li>
        <li><button class="twist" aria-label="Expand"></button><svg><use href="#book"/></svg>Feet</li>
        <li><button class="twist" aria-label="Expand"></button><svg><use href="#book"/></svg>Fronts</li>
        <li><button class="twist" aria-label="Expand"></button><svg><use href="#book"/></svg>Handles</li>
        <li><button class="twist" aria-label="Expand"></button><svg><use href="#book"/></svg>Hinges</li>
        <li><button class="twist" aria-label="Expand"></button><svg><use href="#book"/></svg>Legs</li>
        <li><button class="twist" aria-label="Expand"></button><svg><use href="#book"/></svg>Machinings</li>
        <li><button class="twist" aria-label="Expand"></button><svg><use href="#book"/></svg>Separations</li>
        <li><button class="twist open" aria-label="Collapse"></button><svg><use href="#book"/></svg>Shelves</li>
        <li class="leaf"><span><svg><use href="#frameblue"/></svg>Adjustable shelves</span></li>
        <li class="leaf"><span><svg><use href="#frameblue"/></svg>Master Shelves</span></li>
        <li class="leaf"><span><svg><use href="#frameblue"/></svg>Shelves</span></li>
        <li class="leaf"><span class="selected"><svg><use href="#frameblue"/></svg>Shelves Removable</span></li>
        <li><button class="twist" aria-label="Expand"></button><svg><use href="#book"/></svg>Swoodbox Shelves</li>
        <li><button class="twist" aria-label="Expand"></button><svg><use href="#book"/></svg>Training_JGI</li>
        <li><button class="twist" aria-label="Expand"></button><svg><use href="#book"/></svg>Wall Mounts</li>
      </ul>
    </div>
  </aside>
</main>

<footer class="statusbar">
  <span class="product">SOLIDWORKS Premium 2023 SP0.1</span>
  <span class="state">Under Defined</span>
  <span class="mode">Editing Assembly</span>
  <span class="units">Custom</span>
  <i class="caret up"></i>
  <svg><use href="#tag"/></svg>
</footer>
</body>
</html>
```

FILE: styles.css
```css
* {
    box-sizing: border-box;
}
html, body {
    height: 100%;
}
body {
    margin: 0;
    display: flex;
    flex-direction: column;
    overflow: hidden;
    background: #f7f7f7;
    color: #111;
    font-family: "Open Sans", "Noto Sans", sans-serif;
    font-size: 14px;
    line-height: 20px;
}
button {
    font: inherit;
    color: inherit;
    background: none;
    border: 0;
    padding: 0;
    white-space: nowrap;
}
button svg, li svg, label svg {
    display: block;
    flex: none;
}
input {
    font: inherit;
    border: 0;
    padding: 0;
    background: none;
    outline: none;
    min-width: 0;
    flex: 1;
}
ul {
    list-style: none;
    margin: 0;
    padding: 0;
}
.sprite {
    position: absolute;
    width: 0;
    height: 0;
}
.flip {
    transform: scaleX(-1);
}
.caret {
    flex: none;
    width: 0;
    height: 0;
    border: 3px solid transparent;
    border-top: 4px solid #333;
    border-bottom: 0;
}
.caret.off, .caret.soft {
    border-top-color: #999;
}
.caret.up {
    border-top: 0;
    border-bottom: 4px solid #333;
}
.dot {
    width: 6px;
    height: 6px;
    border: 1px solid #8a8a8a;
    border-radius: 50%;
    background: #d0d0d0;
}

/* title bar */
.titlebar {
    flex: none;
    height: 40px;
    display: flex;
    align-items: center;
    border-top: 1px solid #bdbdbd;
    border-bottom: 1px solid #bdbdbd;
    font-size: 13px;
}
.brand {
    flex: none;
    display: flex;
    align-items: center;
    gap: 4px;
    width: 146px;
    padding-left: 4px;
    color: #d9291c;
}
.ds {
    width: 22px;
    height: 22px;
}
.brand-name {
    font-family: Lato, sans-serif;
    font-size: 14px;
    font-style: italic;
}
.brand-name b {
    font-weight: 900;
}
.menu {
    flex: none;
    display: flex;
    justify-content: space-between;
    width: 269px;
    padding-top: 3px;
}
.menu a {
    color: #111;
    text-decoration: none;
}
.pin {
    flex: none;
    width: 14px;
    height: 16px;
    margin: 0 6px 0 14px;
}
.quick {
    flex: none;
    display: flex;
    align-items: center;
    height: 100%;
    width: 500px;
    padding-left: 25px;
    border-left: 1px solid #bdbdbd;
}
.quick svg {
    width: 20px;
    height: 20px;
}
.quick > .caret {
    margin: 0 12px 0 10px;
}
.quick > button:first-child {
    margin-right: 13px;
}
.quick > button:nth-last-of-type(2) {
    margin: 0 13px;
}
.select-tool {
    display: flex;
    align-items: center;
    width: 47px;
    height: 33px;
    margin: 0 9px 0 -11px;
    border: 1px solid #8c8c8c;
}
.select-tool button {
    width: 32px;
    height: 100%;
    display: grid;
    place-items: center;
    background: #b5b5b5;
    border-right: 1px solid #8c8c8c;
    margin-right: 4px;
}
.doc-name {
    flex: 1;
    text-align: center;
    padding: 2px 0 0 8px;
}
.search {
    flex: none;
    display: flex;
    align-items: center;
    gap: 7px;
    width: 252px;
    height: 29px;
    padding: 0 5px 0 6px;
    background: #fff;
    border: 1px solid #b9b9b9;
}
.search svg {
    width: 18px;
    height: 18px;
}
.search input {
    color: #555;
}
.window-buttons {
    flex: none;
    display: flex;
    gap: 21px;
    padding: 0 6px 0 15px;
}
.window-buttons svg {
    width: 20px;
    height: 20px;
}

/* ribbon */
.ribbon {
    flex: none;
    display: flex;
    height: 81px;
    padding-top: 1px;
    font-size: 13px;
}
.ribbon-col {
    flex: none;
}
.col-a {
    width: 155px;
}
.col-b {
    width: 292px;
}
.ribbon-col button {
    display: flex;
    align-items: center;
    gap: 7px;
    height: 26px;
    padding-left: 6px;
}
.ribbon-col svg {
    width: 18px;
    height: 18px;
}
.ribbon button:disabled {
    color: #b9b9b9;
}
.collapse {
    margin: auto 7px 6px auto;
}
.collapse svg {
    width: 12px;
    height: 12px;
    transform: rotate(-90deg);
}

/* workspace */
.workspace {
    flex: 1;
    min-height: 0;
    display: flex;
    border-top: 1px solid #858585;
}
.document {
    flex: 1;
    min-width: 0;
    display: flex;
    flex-direction: column;
    background:
        radial-gradient(ellipse 62% 56% at 46% 6%, #fff 0%, #fff 45%, rgba(255, 255, 255, 0) 100%),
        linear-gradient(#e8ebf3 0%, #dbdfea 45%, #dde1ed 52%, #f6f7fa 62%, #fff 72%, #fff 90%, #f4f6f9 100%);
}
.tab-row {
    flex: none;
    height: 29px;
    display: flex;
    justify-content: space-between;
}
.cm-tabs {
    display: flex;
    border-bottom: 1px solid #858585;
}
.cm-tabs button {
    background: #d4d4d4;
    border-right: 1px solid #858585;
    color: #222;
}
.cm-tabs .current {
    background: #f7f7f7;
    font-weight: 700;
    color: #333;
}
.w-assembly {
    width: 83px;
}
.w-layout {
    width: 63px;
}
.w-sketch {
    width: 62px;
}
.w-markup {
    width: 70px;
}
.w-evaluate {
    width: 74px;
}
.w-addins {
    width: 173px;
}
.w-mbd {
    width: 56px;
}
.w-swood {
    width: 134px;
}
.w-surfaces {
    width: 75px;
}
.hud {
    display: flex;
    align-items: center;
    gap: 7px;
    padding: 2px 30px 0 0;
}
.hud svg {
    width: 19px;
    height: 19px;
}
.eye-tool {
    display: flex;
    align-items: center;
    height: 26px;
    width: 40px;
    margin: 0 -2px 0 -3px;
    border: 1px solid #999;
    background: #eee;
}
.eye-tool button {
    width: 27px;
    height: 100%;
    display: grid;
    place-items: center;
    background: #b9b9bc;
    border-right: 1px solid #999;
    margin-right: 3px;
}
.doc-body {
    flex: 1;
    min-height: 0;
    display: flex;
}

/* feature manager */
.feature-manager {
    position: relative;
    flex: none;
    width: 507px;
    display: flex;
    flex-direction: column;
    background: #f7f7f7;
    border-top: 1px solid #9db7bd;
    border-right: 1px solid #858585;
    padding-right: 2px;
}
.grip {
    flex: none;
    display: grid;
    place-items: center;
    height: 21px;
    margin-top: 2px;
    border-top: 1px solid #bdbdbd;
    border-bottom: 1px solid #bdbdbd;
}
.fm-tabs {
    flex: none;
    display: flex;
    height: 27px;
    margin: 4px 0 0 2px;
    border-bottom: 1px solid #9a9a9a;
}
.fm-tabs button {
    display: grid;
    place-items: center;
    width: 40px;
    height: 26px;
    background: #d4d4d4;
    border-top: 1px solid #858585;
    border-right: 1px solid #858585;
}
.fm-tabs svg {
    width: 19px;
    height: 19px;
}
.fm-tabs .current {
    height: 27px;
    background: #f7f7f7;
}
.fm-tabs .more {
    margin-left: auto;
    width: 20px;
    border: 0;
    background: none;
}
.fm-tabs .more svg {
    width: 12px;
    height: 12px;
}
.fm-filter {
    flex: none;
    display: flex;
    align-items: center;
    gap: 1px;
    height: 32px;
    margin: 0 3px 0 5px;
    padding-left: 2px;
    border: 1px solid #bdbdbd;
}
.fm-filter svg {
    width: 18px;
    height: 18px;
}
.tree {
    font-size: 15px;
    margin-top: -1px;
}
.tree li {
    position: relative;
    display: flex;
    align-items: center;
    gap: 5px;
    height: 24px;
    padding-left: 27px;
    white-space: nowrap;
    overflow: hidden;
}
.tree .root {
    gap: 4px;
    padding-left: 5px;
}
.tree svg {
    width: 18px;
    height: 18px;
}
.twist {
    position: absolute;
    left: 10px;
    top: 6px;
    width: 5px;
    height: 8px;
    border: 4px solid transparent;
    border-left: 5px solid #555;
    border-right: 0;
}
.rollback {
    flex: none;
    height: 4px;
    margin-left: 1px;
    background: #368bc4;
}
.hscroll {
    flex: none;
    display: flex;
    height: 20px;
    margin: auto 0 5px;
    background: #f0f0f0;
}
.hscroll button {
    width: 22px;
    display: grid;
    place-items: center;
}
.hscroll svg {
    width: 12px;
    height: 12px;
}
.track {
    flex: 1;
}
.thumb {
    width: 86%;
    height: 100%;
    background: #cdcdcd;
}
.splitter {
    position: absolute;
    left: 506px;
    top: 383px;
    width: 12px;
    height: 49px;
    display: grid;
    place-items: center;
    background: #f7f7f7;
    border: 1px solid #858585;
    border-left: 0;
}

/* graphics area */
.canvas {
    position: relative;
    flex: 1;
    min-width: 0;
}
.model {
    display: block;
    width: 100%;
    height: 100%;
}
.axis {
    font-family: "Liberation Sans", Arial, sans-serif;
    font-size: 10px;
}
.task-tabs {
    position: absolute;
    right: 0;
    top: 53px;
    width: 33px;
    border: 1px solid #858585;
    border-right: 0;
}
.task-tabs button {
    display: grid;
    place-items: center;
    width: 100%;
    height: 30px;
    background: #d8d8d8;
    border-bottom: 1px solid #858585;
}
.task-tabs button:last-child {
    border-bottom: 0;
}
.task-tabs .current {
    background: #f7f7f7;
}
.task-tabs svg {
    width: 20px;
    height: 20px;
}

/* model tabs */
.sheet-row {
    flex: none;
    display: flex;
    height: 21px;
    padding-left: 27px;
    background: #f9f9f9;
    border-top: 1px solid #858585;
    border-bottom: 1px solid #858585;
}
.sheet-nav {
    display: flex;
    width: 81px;
    border-top: 1px solid #222;
    background: #a9abc0;
}
.sheet-nav button {
    flex: 1;
    display: grid;
    place-items: center;
    border: 1px solid #8b8da6;
}
.sheet-nav svg {
    width: 14px;
    height: 14px;
    fill: #8486a0;
    stroke: #8486a0;
}
.sheet {
    background: #d4d4d4;
    border-right: 1px solid #858585;
    font-size: 15px;
    line-height: 18px;
}
.sheet.current {
    background: #f7f7f7;
    font-weight: 700;
    padding-left: 4px;
}
.w-model {
    width: 76px;
}
.w-views {
    width: 89px;
}
.w-motion {
    width: 144px;
    padding-right: 12px;
}

/* task pane */
.taskpane {
    flex: none;
    width: 505px;
    display: flex;
    flex-direction: column;
    border-left: 1px solid #858585;
    border-bottom: 1px solid #858585;
}
.tp-head {
    flex: none;
    display: flex;
    align-items: center;
    gap: 4px;
    height: 24px;
    padding: 0 4px 0 10px;
    background: #abacb0;
    border-bottom: 1px solid #111;
}
.tp-head h2 {
    flex: 1;
    margin: 0;
    text-align: center;
    font-size: 14px;
    line-height: 20px;
}
.tp-head svg {
    width: 12px;
    height: 12px;
}
.tp-head .g {
    width: 16px;
    height: 16px;
}
.tp-body {
    flex: 1;
    min-height: 0;
    margin: 1px 1px 1px 4px;
    padding: 2px 4px 0;
    border: 1px solid #e4e4e4;
    border-bottom: 2px solid #858585;
}
.tp-tools {
    display: flex;
    align-items: center;
    height: 25px;
    margin-bottom: 1px;
    padding-left: 1px;
}
.tp-tools button {
    display: grid;
    place-items: center;
    width: 24px;
    height: 24px;
}
.tp-tools button:first-child {
    width: 20px;
}
.tp-tools svg {
    width: 18px;
    height: 18px;
}
.tp-tools .on {
    background: #b5b5b5;
    border: 1px solid #666;
}
.tp-tools .sep {
    width: 1px;
    height: 20px;
    margin: 0 2px 0 3px;
    background: #777;
}
.tp-tools .tp-help {
    width: 18px;
    margin-left: auto;
}
.tp-help svg {
    width: 15px;
    height: 15px;
}
.tp-filter {
    display: flex;
    align-items: center;
    height: 24px;
    padding-left: 3px;
    border: 1px solid #666;
}
.tp-filter svg {
    width: 18px;
    height: 18px;
}
.lib {
    font-size: 12px;
    padding-top: 2px;
}
.lib li {
    position: relative;
    display: flex;
    align-items: center;
    gap: 7px;
    height: 22px;
    padding-left: 27px;
}
.lib .root {
    padding-left: 4px;
}
.lib svg {
    width: 15px;
    height: 17px;
}
.lib .twist {
    left: 11px;
    top: 5px;
}
.lib .twist.open {
    left: 8px;
    top: 9px;
    width: 8px;
    height: 4px;
    border: 4px solid transparent;
    border-top: 4px solid #444;
    border-bottom: 0;
}
.lib .leaf {
    padding-left: 45px;
}
.leaf span {
    display: flex;
    align-items: center;
    gap: 6px;
    height: 22px;
    padding: 0 8px 0 3px;
    border: 1px solid transparent;
}
.leaf svg {
    width: 17px;
    height: 18px;
}
.leaf .selected {
    background: #a9c9e3;
    border-color: #3a86bd;
}

/* status bar */
.statusbar {
    flex: none;
    display: flex;
    align-items: center;
    height: 22px;
    padding: 2px 1px 0 1px;
    border-bottom: 1px solid #222;
}
.product {
    margin-right: auto;
}
.state {
    width: 115px;
}
.mode {
    width: 236px;
}
.units {
    width: 72px;
}
.statusbar svg {
    width: 17px;
    height: 17px;
    margin-left: 27px;
}
```
